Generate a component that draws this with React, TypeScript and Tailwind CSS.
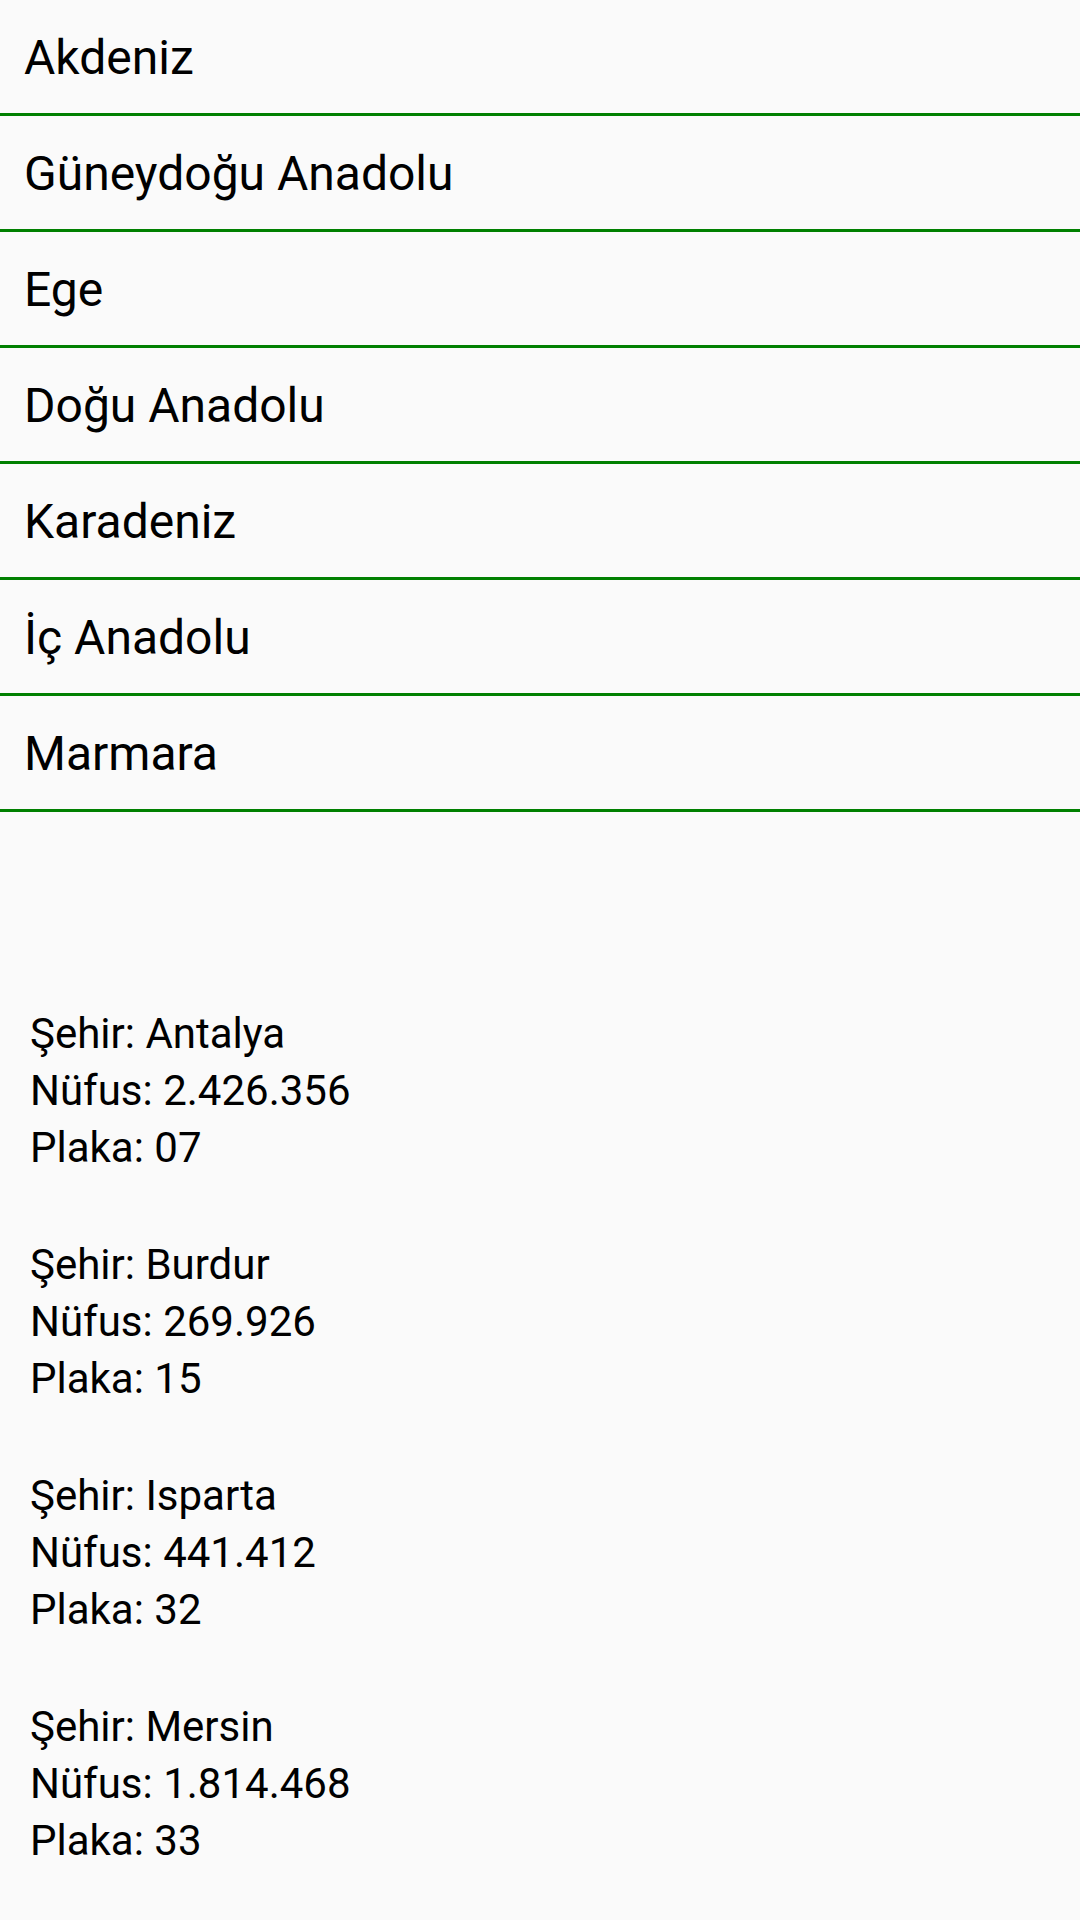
import React from "react";

const regions = [
  "Akdeniz",
  "Güneydoğu Anadolu",
  "Ege",
  "Doğu Anadolu",
  "Karadeniz",
  "İç Anadolu",
  "Marmara",
];

const cities = [
  { name: "Antalya", pop: "2.426.356", plate: "07" },
  { name: "Burdur", pop: "269.926", plate: "15" },
  { name: "Isparta", pop: "441.412", plate: "32" },
  { name: "Mersin", pop: "1.814.468", plate: "33" },
];

export default function App() {
  return (
    <div
      className="w-[1080px] h-[1920px] bg-[#fafafa] text-black overflow-hidden"
      style={{ fontFamily: "Roboto, 'Noto Sans', sans-serif" }}
    >
      <div className="flex flex-col">
        {regions.map((r) => (
          <div
            key={r}
            className="h-[116px] flex items-center pl-6 pt-[3px] border-b-[3px] border-[#008000] text-[48px] leading-none"
          >
            {r}
          </div>
        ))}
      </div>
      <div className="flex flex-col pt-[193px] pl-[30px] gap-[60px]">
        {cities.map((c) => (
          <div key={c.name} className="flex flex-col text-[42px] leading-[57px]">
            <div>Şehir: {c.name}</div>
            <div>Nüfus: {c.pop}</div>
            <div>Plaka: {c.plate}</div>
          </div>
        ))}
      </div>
    </div>
  );
}
